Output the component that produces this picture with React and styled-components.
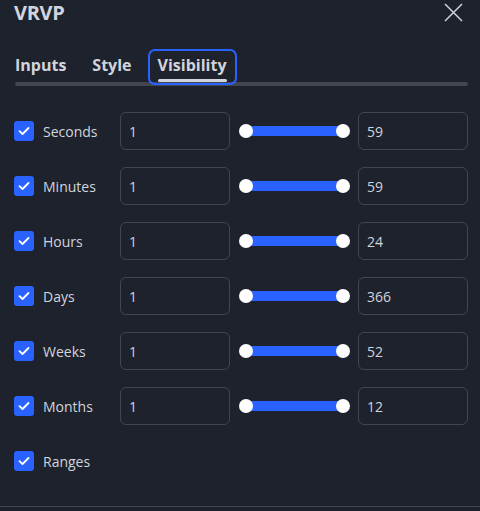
import React from "react";
import styled, { createGlobalStyle } from "styled-components";

const Global = createGlobalStyle`
  html, body { margin: 0; padding: 0; background: #1e222d; }
  body { font-family: "Open Sans", "Liberation Sans", sans-serif; color: #d1d4dc; }
`;

const Panel = styled.div`
  width: 480px;
  height: 511px;
  box-sizing: border-box;
  background: #1e222d;
  display: flex;
  flex-direction: column;
  overflow: hidden;
`;

const Header = styled.div`
  height: 25px;
  padding: 0 17px 0 14px;
  display: flex;
  align-items: center;
  justify-content: space-between;
`;

const Title = styled.div`
  font-family: "Open Sans", "Liberation Sans", sans-serif;
  font-weight: 700;
  font-size: 20px;
  letter-spacing: -0.3px;
  color: #d1d4dc;
`;

const Close = styled.button`
  width: 20px;
  height: 20px;
  padding: 0;
  border: 0;
  background: none;
  color: #d1d4dc;
  display: flex;
  align-items: center;
  justify-content: center;
`;

const TabBar = styled.div`
  position: relative;
  margin: 24px 12px 0 15px;
  height: 37px;
  display: flex;
  align-items: stretch;
  &::after {
    content: "";
    position: absolute;
    left: 0;
    right: 0;
    bottom: 0;
    height: 4px;
    border-radius: 2px;
    background: #434651;
  }
`;

const Tab = styled.div`
  position: relative;
  z-index: 1;
  box-sizing: border-box;
  height: 36px;
  padding: 0 ${(p) => (p.$active ? "8px" : "0")} 4px;
  margin-right: ${(p) => (p.$active ? "0" : "22px")};
  margin-left: ${(p) => (p.$active ? "-8px" : p.$first ? "-2px" : "0")};
  border: 2px solid ${(p) => (p.$active ? "#2962ff" : "transparent")};
  border-radius: 7px;
  display: flex;
  align-items: center;
  font-weight: 700;
  font-size: 16px;
  color: #d1d4dc;
  &::after {
    content: "";
    display: ${(p) => (p.$active ? "block" : "none")};
    position: absolute;
    left: 8px;
    right: 8px;
    bottom: 1px;
    height: 3px;
    border-radius: 2px;
    background: #d1d4dc;
  }
`;

const Rows = styled.div`
  margin-top: 26px;
  padding: 0 12px 0 14px;
  display: flex;
  flex-direction: column;
  gap: 17px;
  flex: 1;
`;

const Row = styled.div`
  height: 38px;
  display: grid;
  grid-template-columns: 106px 110px 128px 110px;
  align-items: center;
`;

const CheckLabel = styled.label`
  display: flex;
  align-items: center;
  gap: 9px;
  font-size: 14px;
  color: #d1d4dc;
`;

const Box = styled.span`
  width: 20px;
  height: 20px;
  border-radius: 3px;
  background: #2962ff;
  display: flex;
  align-items: center;
  justify-content: center;
`;

const Field = styled.div`
  box-sizing: border-box;
  height: 38px;
  border: 1px solid #434651;
  border-radius: 6px;
  padding: 0 8px;
  display: flex;
  align-items: center;
  font-size: 14px;
  color: #d1d4dc;
`;

const Slider = styled.div`
  position: relative;
  height: 14px;
  margin: 0 8px 0 9px;
`;

const Track = styled.div`
  position: absolute;
  left: 7px;
  right: 7px;
  top: 2px;
  height: 10px;
  background: #2962ff;
`;

const Knob = styled.div`
  position: absolute;
  top: 0;
  ${(p) => (p.$right ? "right: 0;" : "left: 0;")}
  width: 14px;
  height: 14px;
  border-radius: 50%;
  background: #ffffff;
`;

const Footer = styled.div`
  height: 4px;
  border-top: 1px solid #434651;
`;

const rows = [
  ["Seconds", "1", "59"],
  ["Minutes", "1", "59"],
  ["Hours", "1", "24"],
  ["Days", "1", "366"],
  ["Weeks", "1", "52"],
  ["Months", "1", "12"],
];

const Check = () => (
  <Box>
    <svg width="12" height="10" viewBox="0 0 12 10">
      <path d="M1.5 5.2 L4.5 8 L10.5 2" fill="none" stroke="#fff" strokeWidth="1.8" strokeLinecap="round" strokeLinejoin="round" />
    </svg>
  </Box>
);

export default function App() {
  return (
    <Panel>
      <Global />
      <Header>
        <Title>VRVP</Title>
        <Close>
          <svg width="19" height="19" viewBox="0 0 19 19">
            <path d="M1 1 L18 18 M18 1 L1 18" stroke="#d1d4dc" strokeWidth="1.5" />
          </svg>
        </Close>
      </Header>
      <TabBar>
        <Tab $first>Inputs</Tab>
        <Tab>Style</Tab>
        <Tab $active>Visibility</Tab>
      </TabBar>
      <Rows>
        {rows.map(([name, a, b]) => (
          <Row key={name}>
            <CheckLabel>
              <Check />
              {name}
            </CheckLabel>
            <Field>{a}</Field>
            <Slider>
              <Track />
              <Knob />
              <Knob $right />
            </Slider>
            <Field>{b}</Field>
          </Row>
        ))}
        <Row>
          <CheckLabel>
            <Check />
            Ranges
          </CheckLabel>
        </Row>
      </Rows>
      <Footer />
    </Panel>
  );
}
